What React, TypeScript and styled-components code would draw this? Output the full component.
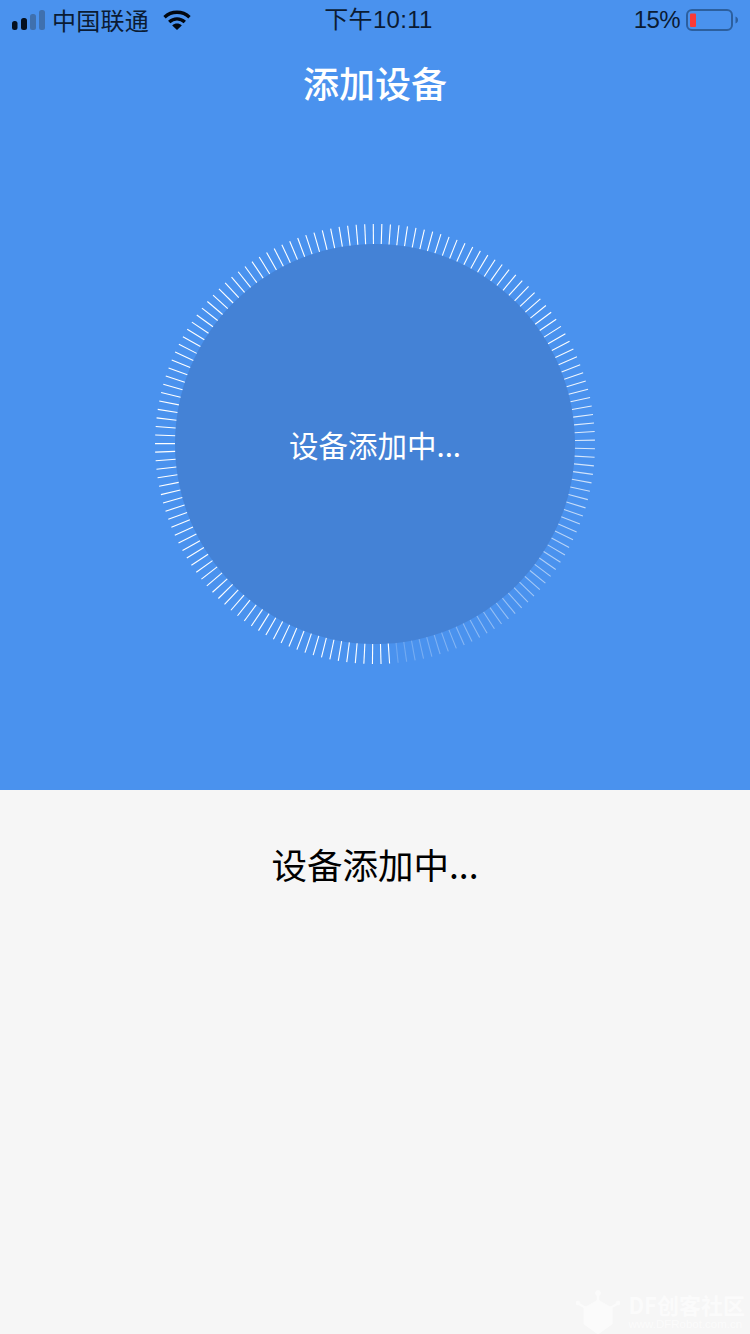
import React from "react"
import styled, { createGlobalStyle } from "styled-components"

const CJK = `"Noto Sans CJK SC", "Noto Sans", sans-serif`
const UI = `"Liberation Sans", "Noto Sans CJK SC", sans-serif`

const GlobalStyle = createGlobalStyle`
    html, body {
        margin: 0;
        padding: 0;
        background: #f6f6f6;
    }
`

const Page = styled.div`
    position: relative;
    width: 750px;
    height: 1334px;
    overflow: hidden;
    display: flex;
    flex-direction: column;
    background: #f6f6f6;
    font-family: ${CJK};
`

const Hero = styled.header`
    height: 790px;
    background: #4a92ee;
    display: flex;
    flex-direction: column;
    align-items: center;
`

const StatusBar = styled.div`
    align-self: stretch;
    height: 40px;
    padding: 0 11px 0 12px;
    display: grid;
    grid-template-columns: 1fr auto 1fr;
    align-items: center;
    color: #0b1b33;
    font-family: ${UI};
    font-size: 24px;
`

const StatusLeft = styled.div`
    display: flex;
    align-items: center;
`

const Carrier = styled.span`
    font-family: ${CJK};
    margin: 0 14px 0 6px;
    letter-spacing: 0.25px;
    line-height: 40px;
`

const Clock = styled.span`
    margin-left: 6px;
    letter-spacing: 0.3px;
    line-height: 40px;
`

const StatusRight = styled.div`
    display: flex;
    align-items: center;
    justify-content: flex-end;
    gap: 6px;
`

const BatteryLevel = styled.span`
    letter-spacing: -0.6px;
`

const Title = styled.h1`
    margin: 17px 0 0;
    color: #fff;
    font-size: 36px;
    font-weight: 500;
    line-height: 50px;
`

const Dial = styled.div`
    position: relative;
    width: 440px;
    height: 440px;
    margin-top: 117px;
    padding: 20px;
    box-sizing: border-box;
`

const Ticks = styled.svg`
    position: absolute;
    inset: 0;
`

const Disc = styled.div`
    height: 100%;
    border-radius: 50%;
    background: #4482d6;
    display: flex;
    align-items: center;
    justify-content: center;
    color: #fff;
    font-size: 29.5px;
    line-height: 40px;
`

const Body = styled.main`
    flex: 1;
    display: flex;
    justify-content: center;
    padding-top: 49px;
`

const Message = styled.p`
    margin: 0;
    color: #000;
    font-size: 35.5px;
    line-height: 50px;
`

const Watermark = styled.div`
    position: absolute;
    right: 5px;
    bottom: -2px;
    display: flex;
    align-items: flex-end;
    gap: 8px;
    color: #fff;
    opacity: 0.6;
    font-family: ${UI};
    font-weight: 700;
`

const WatermarkText = styled.div`
    display: flex;
    flex-direction: column;
    padding-bottom: 5px;
`

const WatermarkName = styled.span`
    font-family: ${CJK};
    font-size: 22px;
    line-height: 26px;
`

const WatermarkUrl = styled.span`
    font-size: 11.5px;
    font-weight: 400;
    line-height: 14px;
`

const SignalBars = () => (
    <svg width="34" height="22" viewBox="0 0 34 22">
        <rect x="0" y="12" width="5.5" height="9" rx="2.5" fill="#05101f" />
        <rect x="9" y="9" width="6" height="12" rx="2.5" fill="#05101f" />
        <rect x="18" y="5" width="6" height="16" rx="2.5" fill="#3f70ae" />
        <rect x="27" y="1" width="6" height="20" rx="2.5" fill="#3f70ae" />
    </svg>
)

const WifiIcon = () => (
    <svg width="28" height="20" viewBox="0 0 28 20" fill="none" stroke="#02070f" strokeWidth="3.4">
        <path d="M1.5 7.2 C8.5 0.6 19.5 0.6 26.5 7.2" />
        <path d="M6.2 12 C10.8 7.8 17.2 7.8 21.8 12" />
        <path d="M14 20 L9.2 15.4 C12 13 16 13 18.8 15.4 Z" fill="#02070f" stroke="none" />
    </svg>
)

const BatteryIcon = () => (
    <svg width="53" height="22" viewBox="0 0 53 22">
        <rect x="1" y="1" width="45" height="20" rx="5" fill="none" stroke="#2c5f9e" strokeWidth="2" />
        <rect x="4" y="4.5" width="6" height="13.5" rx="1" fill="#fb3a37" />
        <path d="M49.5 7.5 C51.5 8.5 52 9.5 52 11 C52 12.5 51.5 13.5 49.5 14.5 Z" fill="#2c5f9e" />
    </svg>
)

const TICK_COUNT = 161
const TICK_START = -0.45

const tickAngle = (i: number) => TICK_START + (i / TICK_COUNT) * 360

// clockwise from 12 o'clock: full white, then fading out until just before 6 o'clock
const tickOpacity = (angle: number) => {
    if (angle <= 60 || angle >= 175) return 1
    return 0.2 + ((175 - angle) / 115) * 0.8
}

const TickRing = () => (
    <Ticks width="440" height="440" viewBox="0 0 440 440">
        {Array.from({ length: TICK_COUNT }, (_, i) => (
            <line
                key={i}
                x1="220"
                y1="0"
                x2="220"
                y2="20"
                stroke="#fff"
                strokeWidth="1.1"
                opacity={tickOpacity(tickAngle(i))}
                transform={`rotate(${tickAngle(i)} 220 220)`}
            />
        ))}
    </Ticks>
)

const WatermarkLogo = () => (
    <svg width="44" height="46" viewBox="0 0 44 46" fill="#fff" stroke="#fff">
        <path d="M22 10 L36 18 L36 34 L22 44 L8 34 L8 18 Z" strokeWidth="1" />
        <path d="M22 2 V11 M1 13 L10 18 M43 13 L34 18" strokeWidth="2.5" />
        <circle cx="22" cy="3" r="2.5" />
        <circle cx="2" cy="13" r="2" />
        <circle cx="42" cy="13" r="2" />
    </svg>
)

export default function App() {
    return (
        <Page>
            <GlobalStyle />
            <Hero>
                <StatusBar>
                    <StatusLeft>
                        <SignalBars />
                        <Carrier>中国联通</Carrier>
                        <WifiIcon />
                    </StatusLeft>
                    <Clock>下午10:11</Clock>
                    <StatusRight>
                        <BatteryLevel>15%</BatteryLevel>
                        <BatteryIcon />
                    </StatusRight>
                </StatusBar>
                <Title>添加设备</Title>
                <Dial>
                    <TickRing />
                    <Disc>设备添加中...</Disc>
                </Dial>
            </Hero>
            <Body>
                <Message>设备添加中...</Message>
            </Body>
            <Watermark>
                <WatermarkLogo />
                <WatermarkText>
                    <WatermarkName>DF创客社区</WatermarkName>
                    <WatermarkUrl>www.DFRobot.com.cn</WatermarkUrl>
                </WatermarkText>
            </Watermark>
        </Page>
    )
}
